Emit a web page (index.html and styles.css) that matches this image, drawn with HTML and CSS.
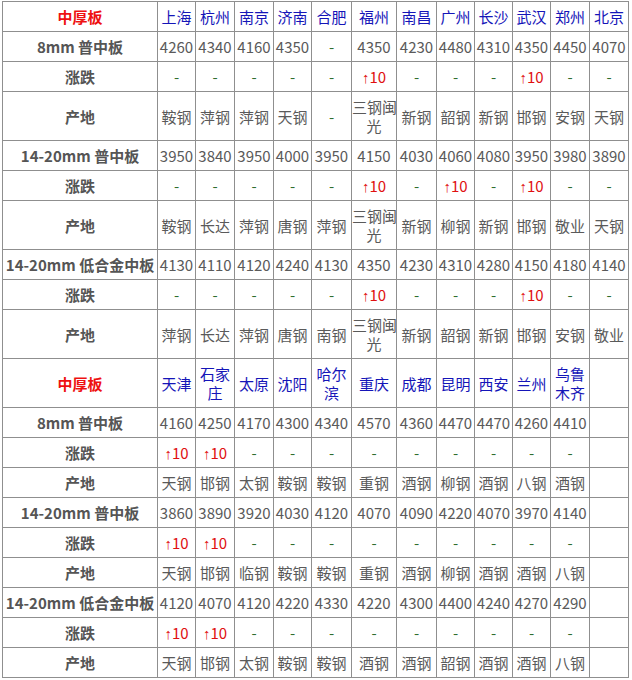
FILE: index.html
```html
<!DOCTYPE html>
<html lang="zh-CN">
<head>
<meta charset="utf-8">
<title>中厚板价格</title>
<link rel="stylesheet" href="styles.css">
</head>
<body>
<table class="price">
  <colgroup>
    <col class="c-label"><col class="c38"><col class="c39"><col class="c39"><col class="c38"><col class="c40"><col class="c45"><col class="c40"><col class="c38"><col class="c38"><col class="c38"><col class="c39"><col class="c39">
  </colgroup>
  <tbody>
    <tr>
      <td class="hd">中厚板</td>
      <td class="city">上海</td><td class="city">杭州</td><td class="city">南京</td><td class="city">济南</td><td class="city">合肥</td><td class="city">福州</td><td class="city">南昌</td><td class="city">广州</td><td class="city">长沙</td><td class="city">武汉</td><td class="city">郑州</td><td class="city">北京</td>
    </tr>
    <tr>
      <td class="lab">8mm 普中板</td>
      <td>4260</td><td>4340</td><td>4160</td><td>4350</td><td class="na">-</td><td>4350</td><td>4230</td><td>4480</td><td>4310</td><td>4350</td><td>4450</td><td>4070</td>
    </tr>
    <tr>
      <td class="lab">涨跌</td>
      <td class="na">-</td><td class="na">-</td><td class="na">-</td><td class="na">-</td><td class="na">-</td><td class="up"><span class="arr">↑</span>10</td><td class="na">-</td><td class="na">-</td><td class="na">-</td><td class="up"><span class="arr">↑</span>10</td><td class="na">-</td><td class="na">-</td>
    </tr>
    <tr class="tall">
      <td class="lab">产地</td>
      <td>鞍钢</td><td>萍钢</td><td>萍钢</td><td>天钢</td><td class="na">-</td><td>三钢闽<br>光</td><td>新钢</td><td>韶钢</td><td>新钢</td><td>邯钢</td><td>安钢</td><td>天钢</td>
    </tr>
    <tr>
      <td class="lab">14-20mm 普中板</td>
      <td>3950</td><td>3840</td><td>3950</td><td>4000</td><td>3950</td><td>4150</td><td>4030</td><td>4060</td><td>4080</td><td>3950</td><td>3980</td><td>3890</td>
    </tr>
    <tr>
      <td class="lab">涨跌</td>
      <td class="na">-</td><td class="na">-</td><td class="na">-</td><td class="na">-</td><td class="na">-</td><td class="up"><span class="arr">↑</span>10</td><td class="na">-</td><td class="up"><span class="arr">↑</span>10</td><td class="na">-</td><td class="up"><span class="arr">↑</span>10</td><td class="na">-</td><td class="na">-</td>
    </tr>
    <tr class="tall">
      <td class="lab">产地</td>
      <td>鞍钢</td><td>长达</td><td>萍钢</td><td>唐钢</td><td>萍钢</td><td>三钢闽<br>光</td><td>新钢</td><td>柳钢</td><td>新钢</td><td>邯钢</td><td>敬业</td><td>天钢</td>
    </tr>
    <tr>
      <td class="lab">14-20mm 低合金中板</td>
      <td>4130</td><td>4110</td><td>4120</td><td>4240</td><td>4130</td><td>4350</td><td>4230</td><td>4310</td><td>4280</td><td>4150</td><td>4180</td><td>4140</td>
    </tr>
    <tr>
      <td class="lab">涨跌</td>
      <td class="na">-</td><td class="na">-</td><td class="na">-</td><td class="na">-</td><td class="na">-</td><td class="up"><span class="arr">↑</span>10</td><td class="na">-</td><td class="na">-</td><td class="na">-</td><td class="up"><span class="arr">↑</span>10</td><td class="na">-</td><td class="na">-</td>
    </tr>
    <tr class="tall">
      <td class="lab">产地</td>
      <td>萍钢</td><td>长达</td><td>萍钢</td><td>唐钢</td><td>南钢</td><td>三钢闽<br>光</td><td>新钢</td><td>韶钢</td><td>新钢</td><td>邯钢</td><td>安钢</td><td>敬业</td>
    </tr>
    <tr class="tall">
      <td class="hd">中厚板</td>
      <td class="city">天津</td><td class="city">石家<br>庄</td><td class="city">太原</td><td class="city">沈阳</td><td class="city">哈尔<br>滨</td><td class="city">重庆</td><td class="city">成都</td><td class="city">昆明</td><td class="city">西安</td><td class="city">兰州</td><td class="city">乌鲁<br>木齐</td><td></td>
    </tr>
    <tr>
      <td class="lab">8mm 普中板</td>
      <td>4160</td><td>4250</td><td>4170</td><td>4300</td><td>4340</td><td>4570</td><td>4360</td><td>4470</td><td>4470</td><td>4260</td><td>4410</td><td></td>
    </tr>
    <tr>
      <td class="lab">涨跌</td>
      <td class="up"><span class="arr">↑</span>10</td><td class="up"><span class="arr">↑</span>10</td><td class="na">-</td><td class="na">-</td><td class="na">-</td><td class="na">-</td><td class="na">-</td><td class="na">-</td><td class="na">-</td><td class="na">-</td><td class="na">-</td><td></td>
    </tr>
    <tr>
      <td class="lab">产地</td>
      <td>天钢</td><td>邯钢</td><td>太钢</td><td>鞍钢</td><td>鞍钢</td><td>重钢</td><td>酒钢</td><td>柳钢</td><td>酒钢</td><td>八钢</td><td>酒钢</td><td></td>
    </tr>
    <tr>
      <td class="lab">14-20mm 普中板</td>
      <td>3860</td><td>3890</td><td>3920</td><td>4030</td><td>4120</td><td>4070</td><td>4090</td><td>4220</td><td>4070</td><td>3970</td><td>4140</td><td></td>
    </tr>
    <tr>
      <td class="lab">涨跌</td>
      <td class="up"><span class="arr">↑</span>10</td><td class="up"><span class="arr">↑</span>10</td><td class="na">-</td><td class="na">-</td><td class="na">-</td><td class="na">-</td><td class="na">-</td><td class="na">-</td><td class="na">-</td><td class="na">-</td><td class="na">-</td><td></td>
    </tr>
    <tr>
      <td class="lab">产地</td>
      <td>天钢</td><td>邯钢</td><td>临钢</td><td>鞍钢</td><td>鞍钢</td><td>重钢</td><td>酒钢</td><td>柳钢</td><td>酒钢</td><td>酒钢</td><td>八钢</td><td></td>
    </tr>
    <tr>
      <td class="lab">14-20mm 低合金中板</td>
      <td>4120</td><td>4070</td><td>4120</td><td>4220</td><td>4330</td><td>4220</td><td>4300</td><td>4400</td><td>4240</td><td>4270</td><td>4290</td><td></td>
    </tr>
    <tr>
      <td class="lab">涨跌</td>
      <td class="up"><span class="arr">↑</span>10</td><td class="up"><span class="arr">↑</span>10</td><td class="na">-</td><td class="na">-</td><td class="na">-</td><td class="na">-</td><td class="na">-</td><td class="na">-</td><td class="na">-</td><td class="na">-</td><td class="na">-</td><td></td>
    </tr>
    <tr>
      <td class="lab">产地</td>
      <td>天钢</td><td>邯钢</td><td>太钢</td><td>鞍钢</td><td>鞍钢</td><td>酒钢</td><td>酒钢</td><td>韶钢</td><td>酒钢</td><td>酒钢</td><td>八钢</td><td></td>
    </tr>
  </tbody>
</table>
</body>
</html>
```

FILE: styles.css
```css
html, body {
  margin: 0;
  padding: 0;
  background: #ffffff;
}

body {
  padding: 1px 0 0 2px;
  font-family: "Noto Sans CJK SC", "Noto Sans", sans-serif;
}

.price {
  border-collapse: collapse;
  table-layout: fixed;
  width: 626px;
  border: 1px solid #5c5c5c;
}

.c-label { width: 155px; }
.c38 { width: 38px; }
.c39 { width: 39px; }
.c40 { width: 40px; }
.c45 { width: 45px; }

.price tr {
  height: 30px;
}

.price tr.tall {
  height: 49px;
}

.price td {
  border: 1px solid #8f8f8f;
  padding: 0;
  font-size: 15px;
  line-height: 19px;
  text-align: center;
  vertical-align: middle;
  color: #5a5a5a;
  white-space: nowrap;
  overflow: hidden;
}

.price td.lab {
  font-weight: bold;
  color: #555555;
}

.price td.hd {
  font-weight: bold;
  color: #ee1111;
}

.price td.city {
  color: #1515b8;
}

.price td.na {
  color: #2f6e2f;
}

.price td.up {
  color: #e01010;
}

.arr {
  font-family: "Liberation Sans", sans-serif;
  line-height: 0;
}
```
